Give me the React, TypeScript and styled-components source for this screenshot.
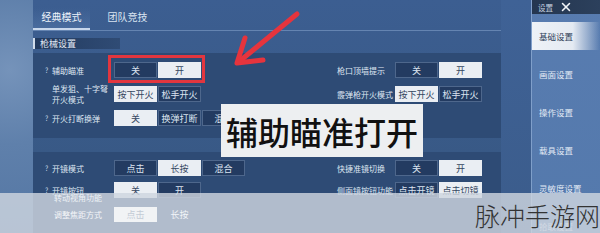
import React from "react";
import styled, { createGlobalStyle } from "styled-components";
import { X } from "lucide-react";

const GlobalStyle = createGlobalStyle`
  html, body {
    margin: 0;
    padding: 0;
    background: #3a5a88;
  }
  * {
    box-sizing: border-box;
  }
`;

const FONT = `"Noto Sans CJK SC", "Noto Sans", sans-serif`;

type Opt = { text: string; on?: boolean };
type Setting = { hint?: boolean; label: React.ReactNode; opts?: Opt[] };
type Row = { left: Setting; right?: Setting };

const gunRows: Row[] = [
  {
    left: { hint: true, label: "辅助瞄准", opts: [{ text: "关" }, { text: "开", on: true }] },
    right: { label: "枪口顶墙提示", opts: [{ text: "关" }, { text: "开", on: true }] },
  },
  {
    left: {
      label: (
        <>
          单发狙、十字弩
          <br />
          开火模式
        </>
      ),
      opts: [{ text: "按下开火", on: true }, { text: "松手开火" }],
    },
    right: { label: "霰弹枪开火模式", opts: [{ text: "按下开火", on: true }, { text: "松手开火" }] },
  },
  {
    left: {
      hint: true,
      label: "开火打断换弹",
      opts: [{ text: "关", on: true }, { text: "换弹打断" }, { text: "混合" }],
    },
  },
];

const scopeRows: Row[] = [
  {
    left: {
      hint: true,
      label: "开镜模式",
      opts: [{ text: "点击" }, { text: "长按", on: true }, { text: "混合" }],
    },
    right: { label: "快捷准镜切换", opts: [{ text: "关" }, { text: "开", on: true }] },
  },
  {
    left: { hint: true, label: "开镜按钮", opts: [{ text: "关", on: true }, { text: "开" }] },
    right: { label: "侧面镜按钮功能", opts: [{ text: "点击开镜" }, { text: "点击切镜", on: true }] },
  },
];

const navItems = ["基础设置", "画面设置", "操作设置", "载具设置", "灵敏度设置", "拾取设置"];

export default function App() {
  return (
    <>
      <GlobalStyle />
      <Screen>
        <Haze />
        <Main>
          <TabBar>
            <Tab $active>经典模式</Tab>
            <Tab>团队竞技</Tab>
          </TabBar>
          <GroupTitle>枪械设置</GroupTitle>
          <Panel $h={85}>
            {gunRows.map((r, i) => (
              <SettingRow key={i} row={r} h={24} />
            ))}
          </Panel>
          <Panel $gap={14}>
            {scopeRows.map((r, i) => (
              <SettingRow key={i} row={r} h={22} />
            ))}
          </Panel>
        </Main>
        <Gutter />
        <Sidebar>
          <SideTop>
            <SideTitle>设置</SideTitle>
            <X size={14} strokeWidth={2.6} color="#f2f5f9" />
          </SideTop>
          <Nav>
            {navItems.map((n, i) => (
              <NavItem key={n} $active={i === 0}>
                {n}
              </NavItem>
            ))}
          </Nav>
        </Sidebar>

        <RedFrame />
        <Arrow width="80" height="70" viewBox="0 0 80 70">
          <line x1="70" y1="6" x2="14" y2="52" />
          <polyline points="18,30 10,55 36,52" />
        </Arrow>
        <Caption>辅助瞄准打开</Caption>

        <FadedStrip>
          <FadedLabel>转动视角功能</FadedLabel>
          <FadedRow>
            <FadedName>调整焦距方式</FadedName>
            <Segments>
              <FadedBtn $on>点击</FadedBtn>
              <FadedBtn>长按</FadedBtn>
            </Segments>
          </FadedRow>
        </FadedStrip>
        <Watermark>脉冲手游网</Watermark>
      </Screen>
    </>
  );
}

function SettingCell({ s, labelW }: { s: Setting; labelW: number }) {
  return (
    <Cell>
      <Label $w={labelW}>
        {labelW > 60 && <Hint>{s.hint ? "?" : ""}</Hint>}
        <span>{s.label}</span>
      </Label>
      {s.opts && (
        <Segments>
          {s.opts.map((o) => (
            <SegBtn key={o.text} $on={o.on}>
              {o.text}
            </SegBtn>
          ))}
        </Segments>
      )}
    </Cell>
  );
}

function SettingRow({ row, h }: { row: Row; h: number }) {
  return (
    <RowWrap $h={h}>
      <LeftHalf>
        <SettingCell s={row.left} labelW={69} />
      </LeftHalf>
      {row.right && <SettingCell s={row.right} labelW={58} />}
    </RowWrap>
  );
}

const Screen = styled.div`
  position: relative;
  width: 600px;
  height: 233px;
  overflow: hidden;
  display: flex;
  font-family: ${FONT};
  background: linear-gradient(180deg, #3c5e91 0%, #395a88 55%, #36567f 100%);
`;

const Haze = styled.div`
  width: 33px;
  flex-shrink: 0;
  background: radial-gradient(circle at 30% 30%, #7593ba 0%, #5f80ab 45%, #5476a3 100%);
`;

const Main = styled.main`
  width: 468px;
  flex-shrink: 0;
  display: flex;
  flex-direction: column;
`;

const Gutter = styled.div`
  width: 30px;
  flex-shrink: 0;
  background: linear-gradient(180deg, #3f6296 0%, #3b5c8b 100%);
`;

const TabBar = styled.div`
  height: 31px;
  display: flex;
  align-items: flex-end;
  gap: 9px;
  border-bottom: 1px solid rgba(150, 180, 220, 0.45);
`;

const Tab = styled.div<{ $active?: boolean }>`
  width: 57px;
  height: 22px;
  display: flex;
  align-items: center;
  justify-content: center;
  padding-bottom: 4px;
  font-size: 10px;
  color: ${(p) => (p.$active ? "#eef3fa" : "#d9e3f0")};
  border-bottom: 2px solid ${(p) => (p.$active ? "#c9d8ec" : "transparent")};
  background: ${(p) =>
    p.$active ? "linear-gradient(180deg, rgba(80,115,165,0) 0%, rgba(90,125,175,0.45) 100%)" : "none"};
`;

const GroupTitle = styled.div`
  margin-top: 7px;
  width: 87px;
  height: 11px;
  display: flex;
  align-items: center;
  padding-left: 5px;
  font-size: 9px;
  color: #e3eaf4;
  border-left: 2px solid #d0dcec;
  background: linear-gradient(90deg, rgba(30, 52, 86, 0.85) 0%, rgba(40, 64, 100, 0.6) 100%);
`;

const Panel = styled.section<{ $h?: number; $gap?: number }>`
  margin-top: ${(p) => p.$gap ?? 4}px;
  ${(p) => (p.$h ? `height: ${p.$h}px;` : "flex: 1;")}
  padding-top: 5px;
  background: #2e4b75;
  display: flex;
  flex-direction: column;
`;

const RowWrap = styled.div<{ $h: number }>`
  height: ${(p) => p.$h}px;
  display: flex;
  align-items: center;
`;

const LeftHalf = styled.div`
  width: 304px;
  padding-left: 12px;
`;

const Cell = styled.div`
  display: flex;
  align-items: center;
`;

const Label = styled.div<{ $w: number }>`
  width: ${(p) => p.$w}px;
  display: flex;
  align-items: center;
  font-size: 8px;
  line-height: 11px;
  color: #dfe7f2;
  white-space: nowrap;
`;

const Hint = styled.span`
  width: 7px;
  font-size: 7px;
  color: #c9d6e6;
`;

const Segments = styled.div`
  display: flex;
  gap: 1px;
`;

const SegBtn = styled.div<{ $on?: boolean }>`
  width: 43px;
  height: 16px;
  display: flex;
  align-items: center;
  justify-content: center;
  font-size: 9px;
  color: ${(p) => (p.$on ? "#34465f" : "#dbe4f0")};
  background: ${(p) => (p.$on ? "#eaeef3" : "rgba(28, 48, 80, 0.55)")};
  border: 1px solid ${(p) => (p.$on ? "#eaeef3" : "rgba(160, 185, 220, 0.35)")};
`;

const Sidebar = styled.aside`
  flex: 1;
  display: flex;
  flex-direction: column;
  background: linear-gradient(180deg, #587cb0 0%, #5479ac 100%);
  border-left: 1px solid rgba(170, 195, 230, 0.5);
`;

const SideTop = styled.div`
  height: 24px;
  display: flex;
  align-items: center;
  gap: 6px;
  padding-left: 6px;
  background: linear-gradient(90deg, #243650 0%, #2c405c 100%);
`;

const SideTitle = styled.span`
  font-size: 7.5px;
  color: #c7d2e0;
`;

const Nav = styled.nav`
  display: flex;
  flex-direction: column;
  gap: 10px;
  padding-top: 8px;
`;

const NavItem = styled.div<{ $active?: boolean }>`
  height: 28px;
  display: flex;
  align-items: center;
  padding-left: 7px;
  font-size: 8.5px;
  color: ${(p) => (p.$active ? "#2c3c56" : "#e2eaf5")};
  background: ${(p) =>
    p.$active
      ? "linear-gradient(90deg, #eef2f7 0%, #e4eaf2 60%, rgba(228,234,242,0) 100%)"
      : "none"};
`;

const RedFrame = styled.div`
  position: absolute;
  left: 108px;
  top: 55px;
  width: 97px;
  height: 28px;
  border: 3px solid #e2363f;
`;

const Arrow = styled.svg`
  position: absolute;
  left: 227px;
  top: 8px;
  fill: none;
  stroke: #e6343d;
  stroke-width: 5;
  stroke-linecap: round;
  stroke-linejoin: round;
`;

const Caption = styled.div`
  position: absolute;
  left: 221px;
  top: 104px;
  width: 202px;
  height: 53px;
  display: flex;
  align-items: center;
  justify-content: center;
  background: #edeff1;
  font-size: 32px;
  font-weight: 500;
  color: #111;
  letter-spacing: 0;
`;

const FadedStrip = styled.div`
  position: absolute;
  left: 0;
  right: 0;
  top: 193px;
  bottom: 0;
  background: rgba(206, 214, 223, 0.82);
  padding-left: 54px;
  display: flex;
  flex-direction: column;
`;

const FadedLabel = styled.div`
  height: 9px;
  font-size: 8px;
  line-height: 9px;
  color: #eef2f6;
`;

const FadedRow = styled.div`
  margin-top: 5px;
  display: flex;
  align-items: center;
`;

const FadedName = styled.div`
  width: 60px;
  font-size: 8px;
  color: #f4f6f9;
`;

const FadedBtn = styled.div<{ $on?: boolean }>`
  width: 43px;
  height: 15px;
  display: flex;
  align-items: center;
  justify-content: center;
  font-size: 9px;
  color: ${(p) => (p.$on ? "#c3cbd5" : "#f2f5f8")};
  background: ${(p) => (p.$on ? "#f1f3f5" : "transparent")};
`;

const Watermark = styled.div`
  position: absolute;
  right: 0;
  bottom: 2px;
  font-size: 25px;
  font-weight: 300;
  line-height: 32px;
  color: #333;
  white-space: nowrap;
`;
